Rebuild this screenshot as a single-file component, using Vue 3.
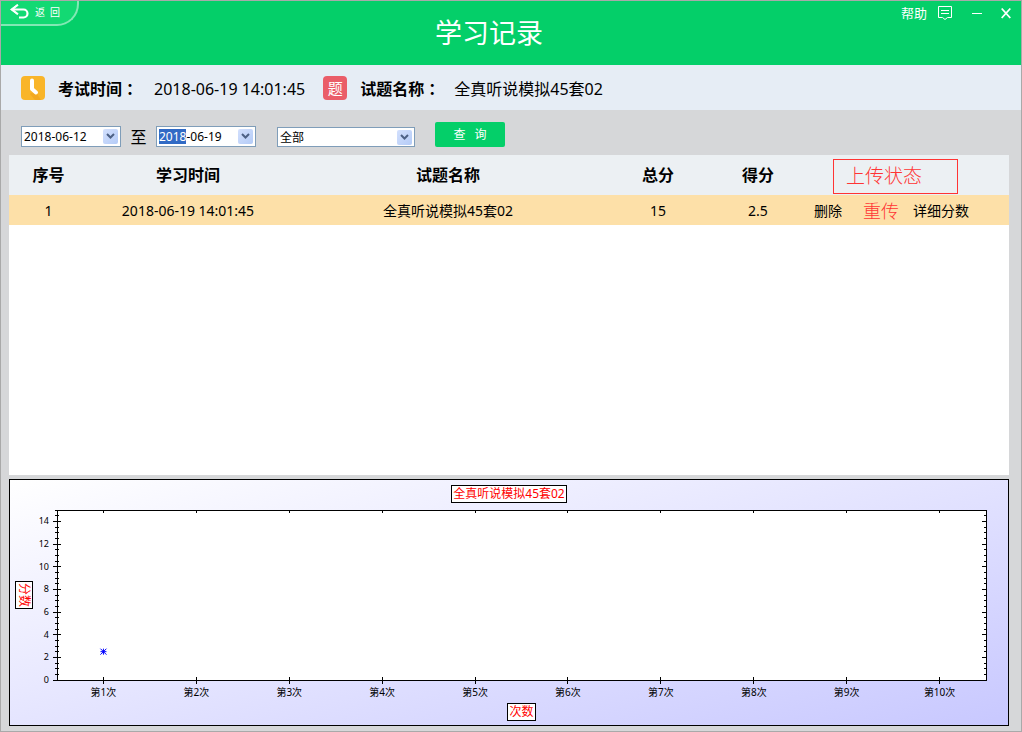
<script setup>
import { ref, onMounted } from 'vue'

const columns = ['序号', '学习时间', '试题名称', '总分', '得分']
const records = [
  { id: 1, time: '2018-06-19 14:01:45', name: '全真听说模拟45套02', total: 15, score: 2.5 },
]

const startDate = ref('2018-06-12')
const endDate = ref('2018-06-19')
const category = ref('全部')
const endInput = ref(null)

const maxScore = 15
const attempts = Array.from({ length: 10 }, (_, i) => i + 1)
const scoreTicks = Array.from({ length: 31 }, (_, i) => i / 2)
const scoreLabels = [0, 2, 4, 6, 8, 10, 12, 14]
const xPos = (n) => (n - 0.5) * 10 + '%'
const yPos = (s) => (1 - s / maxScore) * 100 + '%'
const tickSize = (s) => (s % 2 === 0 ? 4 : 2)

onMounted(() => {
  endInput.value.focus()
  endInput.value.setSelectionRange(0, 4)
})
</script>

<template>
  <div class="window">
    <header class="titlebar">
      <button class="back" type="button">
        <svg width="20" height="16" viewBox="0 0 20 16" aria-hidden="true">
          <path d="M0 5.500 L7.500 0 V11 Z" fill="#fff" />
          <path d="M8 0 L3 5.500 L8 11 Z" fill="#13d973" />
          <path d="M8 .8 L2 5.500 L8 10.200" fill="none" stroke="#fff" stroke-width="2" />
          <path d="M3 5.500 H13.500 A4 4 0 0 1 13.500 13.500 H9" fill="none" stroke="#fff" stroke-width="2.200" />
        </svg>
        <span>返</span><span>回</span>
      </button>
      <h1>学习记录</h1>
      <nav class="tools">
        <a href="#">帮助</a>
        <button type="button" aria-label="反馈">
          <svg width="15" height="15" viewBox="0 0 15 15" fill="none" stroke="#fff">
            <path d="M.5 .5 H13.500 V11.500 H9.500 L7 13.500 L4.500 11.500 H.5 Z M3 4.500 H11 M3 7.500 H11" />
          </svg>
        </button>
        <button type="button" aria-label="最小化">
          <svg width="10" height="15" viewBox="0 0 10 15" stroke="#fff"><path d="M0 7.500 H10" /></svg>
        </button>
        <button type="button" aria-label="关闭">
          <svg width="10" height="15" viewBox="0 0 10 15" stroke="#fff" stroke-width="1.800"><path d="M.7 2.500 L9.300 12 M9.300 2.500 L.7 12" /></svg>
        </button>
      </nav>
    </header>

    <section class="info">
      <svg class="badge" width="24" height="24" viewBox="0 0 24 24" aria-hidden="true">
        <rect width="24" height="24" rx="4" fill="#f9b529" />
        <path d="M10 17 L16 18 L20 24 H14 L9 18 Z" fill="#f2a922" />
        <path d="M11 4.500 V13 L15 16.500" fill="none" stroke="#fff" stroke-width="4" stroke-linecap="round" stroke-linejoin="round" />
      </svg>
      <strong>考试时间<span class="colon">：</span></strong>
      <span class="exam-time">2018-06-19 14:01:45</span>
      <span class="badge topic">题</span>
      <strong>试题名称<span class="colon">：</span></strong>
      <span>全真听说模拟45套02</span>
    </section>

    <form class="filters" @submit.prevent>
      <div class="combo date">
        <input v-model="startDate" type="text" aria-label="开始日期" />
        <button type="button" class="drop" aria-label="选择开始日期">
          <svg width="9" height="7" viewBox="0 0 9 7"><path d="M1 1 L4.500 4.500 L8 1" /></svg>
        </button>
      </div>
      <span class="to">至</span>
      <div class="combo date">
        <input ref="endInput" v-model="endDate" type="text" aria-label="结束日期" />
        <button type="button" class="drop" aria-label="选择结束日期">
          <svg width="9" height="7" viewBox="0 0 9 7"><path d="M1 1 L4.500 4.500 L8 1" /></svg>
        </button>
      </div>
      <div class="combo category">
        <select v-model="category" aria-label="类别">
          <option>全部</option>
        </select>
        <span class="drop">
          <svg width="9" height="7" viewBox="0 0 9 7"><path d="M1 1 L4.500 4.500 L8 1" /></svg>
        </span>
      </div>
      <button class="query" type="submit"><span>查</span><span>询</span></button>
    </form>

    <main class="records">
      <table>
        <colgroup>
          <col class="c-id" /><col class="c-time" /><col class="c-name" /><col class="c-num" /><col class="c-num" /><col />
        </colgroup>
        <thead>
          <tr>
            <th v-for="c in columns" :key="c">{{ c }}</th>
            <th class="status-cell"><div class="status">上传状态</div></th>
          </tr>
        </thead>
        <tbody>
          <tr v-for="r in records" :key="r.id">
            <td>{{ r.id }}</td>
            <td>{{ r.time }}</td>
            <td>{{ r.name }}</td>
            <td>{{ r.total }}</td>
            <td>{{ r.score }}</td>
            <td>
              <div class="actions">
                <a href="#">删除</a>
                <a href="#" class="retry">重传</a>
                <a href="#">详细分数</a>
              </div>
            </td>
          </tr>
        </tbody>
      </table>
    </main>

    <section class="chart">
      <h2 class="tag chart-title">全真听说模拟45套02</h2>
      <div class="y-title"><span class="tag">分数</span></div>
      <div class="y-labels">
        <span v-for="s in scoreLabels" :key="s" :style="{ top: yPos(s) }">{{ s }}</span>
      </div>
      <svg class="plot" shape-rendering="crispEdges">
        <rect width="100%" height="100%" fill="#fff" stroke="#000" />
        <g v-for="n in attempts" :key="n" stroke="#000">
          <svg :x="xPos(n)" y="0" overflow="visible"><path d="M0 0 V3" /></svg>
          <svg :x="xPos(n)" y="100%" overflow="visible"><path d="M0 -3 V4" /></svg>
        </g>
        <g v-for="s in scoreTicks" :key="s" stroke="#000">
          <svg x="0" :y="yPos(s)" overflow="visible"><path :d="`M${-tickSize(s)} 0 H${tickSize(s)}`" /></svg>
          <svg x="100%" :y="yPos(s)" overflow="visible"><path :d="`M${-tickSize(s)} 0 H0`" /></svg>
        </g>
        <svg v-for="r in records" :key="r.id" :x="xPos(r.id)" :y="yPos(r.score)" overflow="visible">
          <path d="M-3 -3 L3 3 M3 -3 L-3 3 M0 -3 V3 M-3 0 H3" stroke="#00f" shape-rendering="auto" />
        </svg>
      </svg>
      <div class="x-labels">
        <span v-for="n in attempts" :key="n">第{{ n }}次</span>
      </div>
      <div class="x-title"><span class="tag">次数</span></div>
    </section>
  </div>
</template>

<style>
body {
  margin: 0;
}
</style>

<style scoped>
* {
  box-sizing: border-box;
}
.window {
  display: flex;
  flex-direction: column;
  min-height: 100vh;
  border: 1px solid #a9a9a9;
  background: #d6d7d9;
  color: #000;
  font: 16px/24px "Noto Sans", "Noto Sans CJK SC", sans-serif;
}
button,
input,
select {
  margin: 0;
  padding: 0;
  border: 0;
  background: none;
  font: inherit;
  color: inherit;
  outline: none;
}
a {
  color: inherit;
  text-decoration: none;
}
.titlebar {
  display: grid;
  grid-template-columns: 1fr auto 1fr;
  align-items: start;
  height: 64px;
  background: #04cf69;
  color: #fff;
}
.back {
  display: flex;
  align-items: center;
  gap: 5px;
  width: 78px;
  height: 25px;
  padding: 0 0 2px 9px;
  border: solid #82e8b4;
  border-width: 0 2px 2px 0;
  border-bottom-right-radius: 22px;
  background: #13d973;
  font-size: 10px;
}
h1 {
  margin: 0 44px 0 0;
  padding-top: 12px;
  font-size: 27px;
  line-height: 40px;
  font-weight: 400;
}
.tools {
  display: flex;
  justify-content: flex-end;
  align-items: center;
  gap: 19px;
  padding-right: 10px;
  font-size: 13px;
}
.tools a {
  margin-right: -8px;
}
.tools svg {
  display: block;
}
.info {
  display: flex;
  align-items: center;
  height: 45px;
  padding: 2px 0 0 20px;
  background: #e6edf5;
}
.badge {
  flex: none;
  margin: 0 13px 2px 0;
}
.topic {
  width: 24px;
  height: 24px;
  border-radius: 4px;
  background: #ea5d68;
  color: #fff;
  font-size: 15px;
  text-align: center;
}
.info strong {
  margin-right: 14px;
}
.colon {
  font-family: "Noto Sans CJK TC", sans-serif;
}
.exam-time {
  margin: 0 18px 0 2px;
}
.filters {
  display: flex;
  align-items: center;
  height: 45px;
  padding: 8px 20px 0;
}
.combo {
  display: flex;
  position: relative;
  height: 21px;
  padding: 2px;
  border: 1px solid #7f9db9;
  background: #fff;
  font-size: 12px;
  line-height: 16px;
}
.date {
  width: 100px;
}
.date input {
  flex: 1;
  min-width: 0;
}
.combo input::selection {
  background: #316ac5;
  color: #fff;
}
.drop {
  display: flex;
  align-items: center;
  justify-content: center;
  width: 15px;
  height: 15px;
  border-radius: 2px;
  background: linear-gradient(135deg, #d3e0fd, #b4cbf7);
}
.drop path {
  fill: none;
  stroke: #4d6185;
  stroke-width: 2;
}
.to {
  width: 35px;
  text-align: center;
}
.category {
  width: 138px;
  height: 20px;
  margin: 0 20px 0 21px;
}
.category select {
  width: 100%;
  appearance: none;
}
.category .drop {
  position: absolute;
  top: 2px;
  right: 2px;
  pointer-events: none;
}
.query {
  display: flex;
  align-items: center;
  justify-content: center;
  gap: 9px;
  width: 70px;
  height: 25px;
  margin-bottom: 4px;
  border-radius: 2px;
  background: #04cf69;
  color: #fff;
  font-size: 12px;
}
.records {
  flex: 1;
  margin: 0 12px 0 8px;
  background: #fff;
}
table {
  width: 100%;
  table-layout: fixed;
  border-collapse: collapse;
}
.c-id {
  width: 7.9%;
}
.c-time {
  width: 20%;
}
.c-name {
  width: 32%;
}
.c-num {
  width: 10%;
}
th,
td {
  padding: 0;
  text-align: center;
}
th {
  height: 40px;
  background: #ecf0f3;
}
td {
  height: 30px;
  padding-top: 2px;
  background: #fde0a8;
  font-size: 14px;
}
.status-cell {
  padding: 3px 51px 0 25px;
}
.status {
  height: 35px;
  padding-left: 12px;
  border: 1px solid #ff3434;
  color: #ff3434;
  font-size: 19px;
  line-height: 32px;
  font-weight: 300;
  text-align: left;
}
.actions {
  display: flex;
  align-items: center;
  padding-left: 6px;
  white-space: nowrap;
}
.retry {
  margin: 0 14px 0 21px;
  color: #ff3434;
  font-size: 18px;
  font-weight: 300;
}
.chart {
  display: grid;
  grid-template-columns: 26px 21px 1fr;
  grid-template-rows: 30px 170px 23px 1fr;
  height: 247px;
  margin: 4px 12px 5px 8px;
  padding-right: 22px;
  border: 1px solid #000;
  background: linear-gradient(165deg, #fff, #c8c8ff);
}
.tag {
  padding: 0 1px;
  border: 1px solid #000;
  background: #fff;
  color: #f00;
  font-size: 12px;
  line-height: 16px;
  font-weight: 400;
}
.chart-title {
  grid-column: 1 / -1;
  justify-self: center;
  margin: 5px -22px 0 0;
  height: 18px;
}
.y-title {
  grid-column: 1;
  display: flex;
  align-items: center;
  padding-left: 5px;
}
.y-title .tag {
  writing-mode: vertical-rl;
  text-orientation: sideways;
  padding: 1px 0;
}
.y-labels {
  position: relative;
}
.y-labels span {
  position: absolute;
  right: 8px;
  font-size: 9px;
  line-height: 12px;
  transform: translateY(-50%);
}
.plot {
  width: 100%;
  height: 100%;
  overflow: visible;
}
.x-labels {
  grid-column: 3;
  display: flex;
  padding-top: 6px;
}
.x-labels span {
  flex: 1;
  font-size: 10px;
  line-height: 12px;
  text-align: center;
}
.x-title {
  grid-column: 3;
  justify-self: center;
}
.x-title .tag {
  display: block;
}
</style>
